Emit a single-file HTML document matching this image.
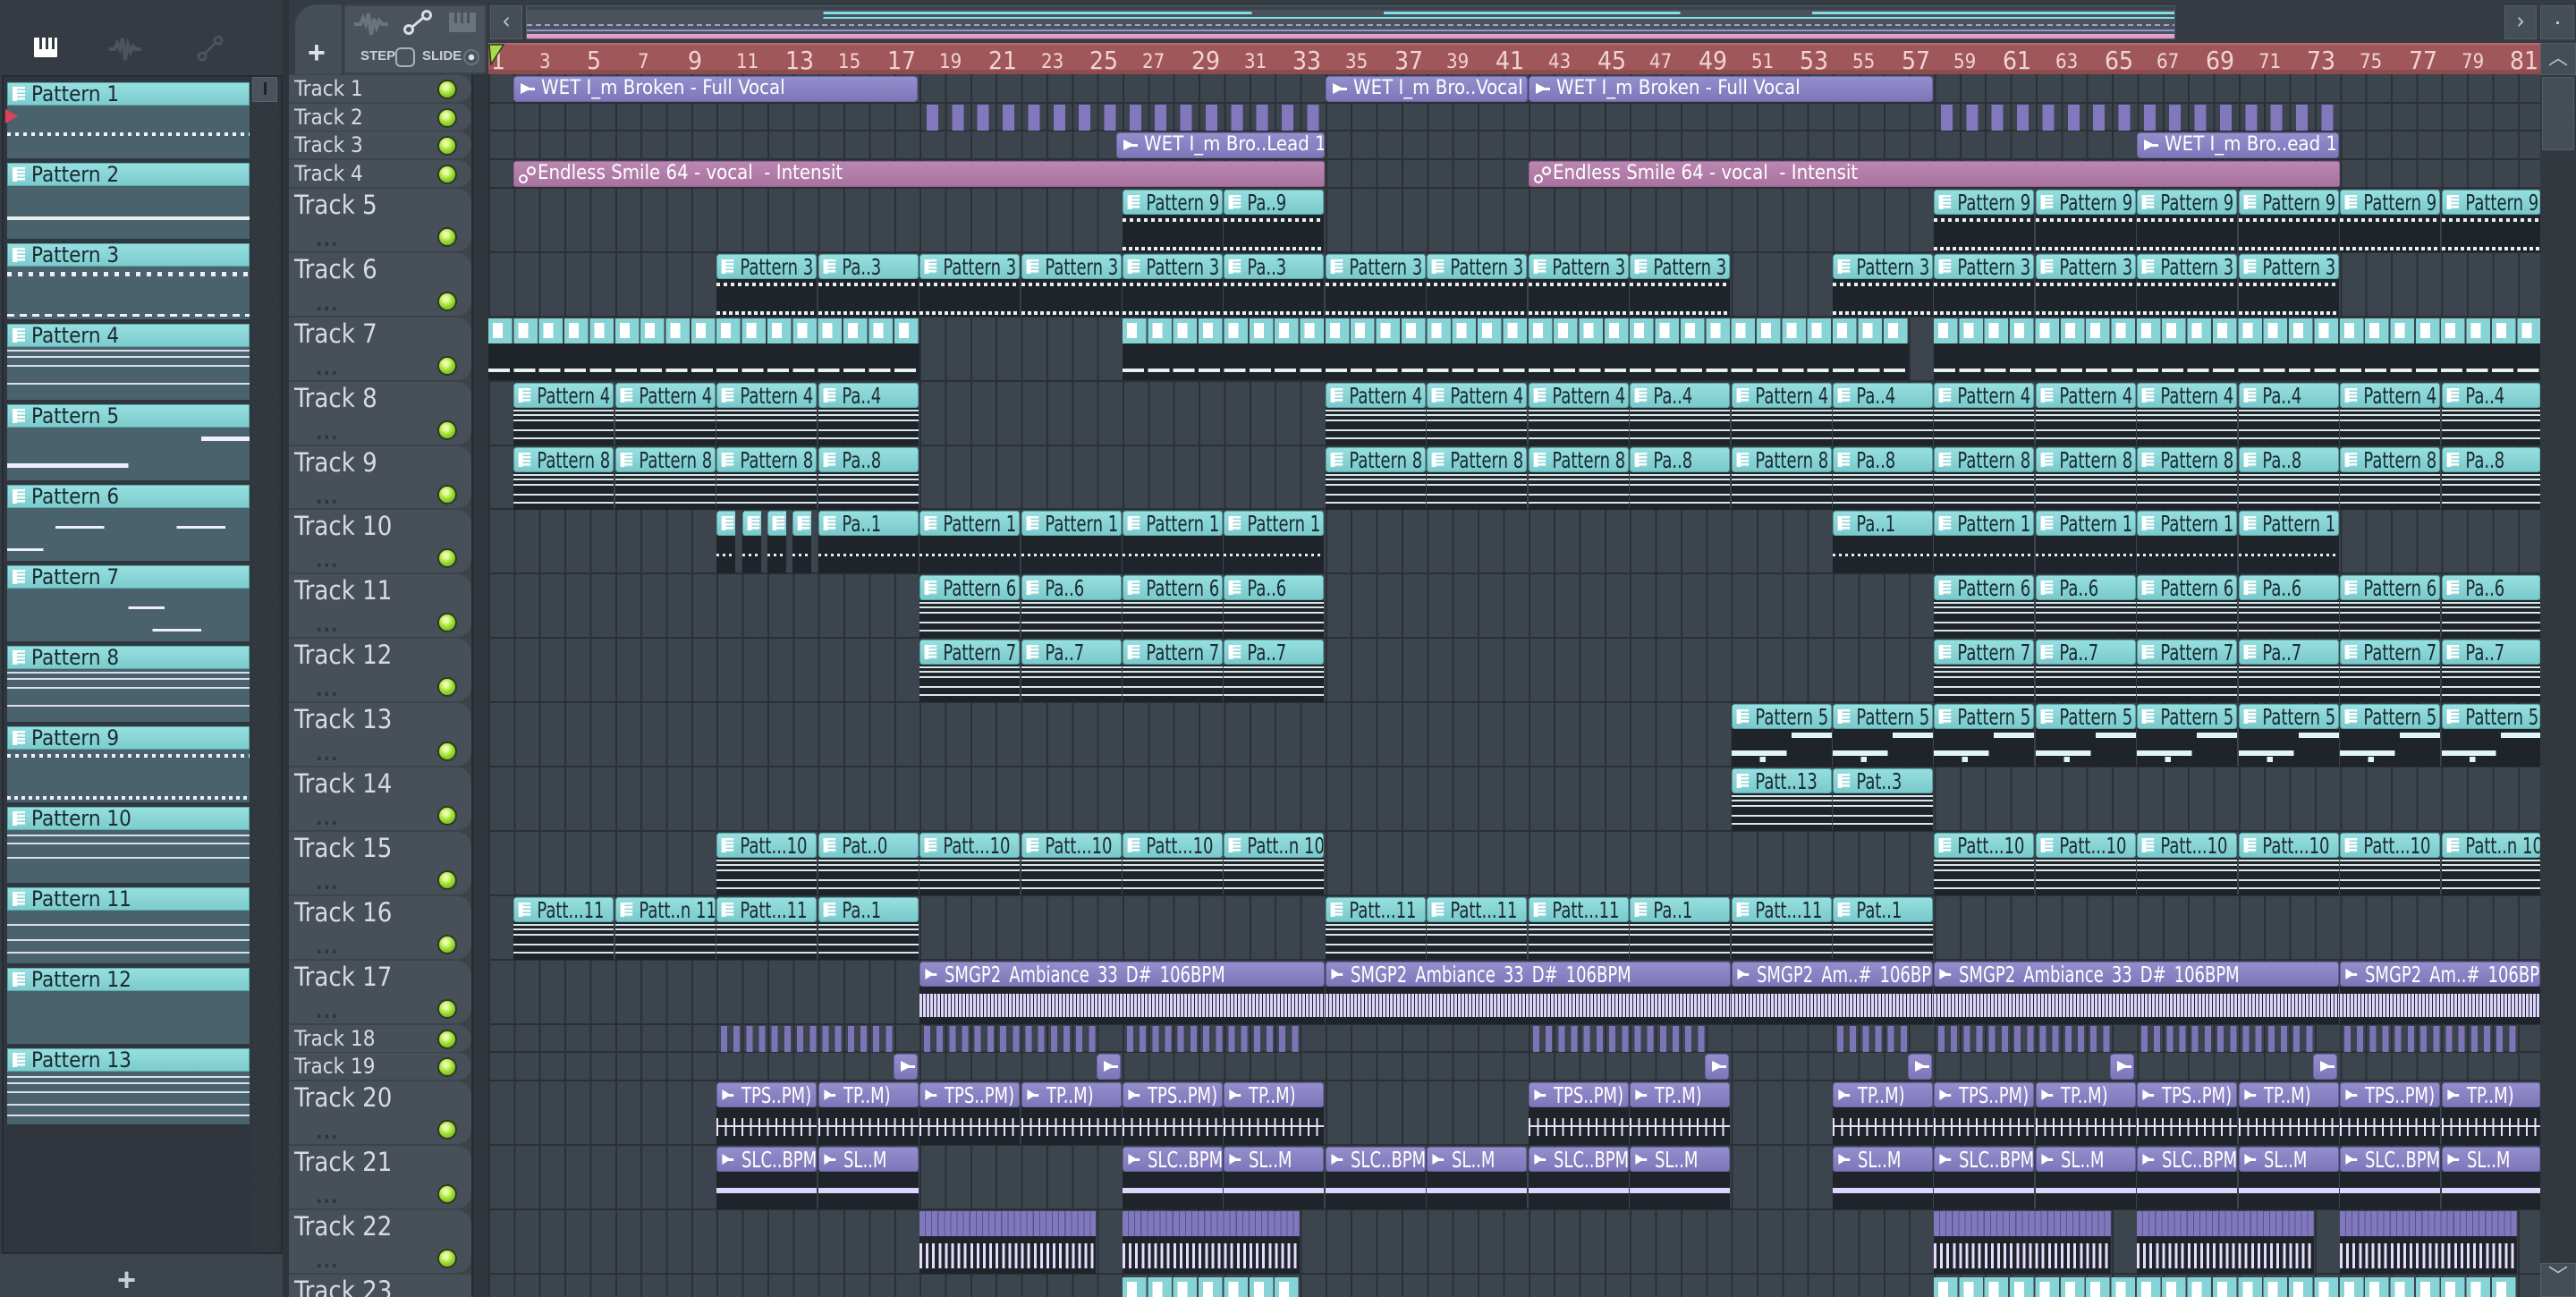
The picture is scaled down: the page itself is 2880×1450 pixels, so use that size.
<!DOCTYPE html>
<html><head><meta charset="utf-8"><style>
*{margin:0;padding:0}
html{width:2880px;height:1450px;overflow:hidden}
body{width:2880px;height:1450px;overflow:hidden;background:#343b42;position:relative;font-family:"Liberation Sans Narrow","DejaVu Sans Condensed","Liberation Sans",sans-serif;font-stretch:condensed}
.abs{position:absolute}
.c{position:absolute;box-sizing:border-box;overflow:hidden}
#grid{position:absolute;left:546px;top:83px;width:2294px;height:1367px;background:
repeating-linear-gradient(90deg,#2a3036 0 2px,transparent 2px 28.36px),#3c444d}
.row{position:absolute;left:546px;width:2294px;border-bottom:2px solid #2a3036;box-sizing:border-box}
.p{height:70px}
.p .h{position:relative;height:28px;width:125%;transform:scaleX(0.8);transform-origin:0 0;box-sizing:border-box;background:linear-gradient(#97dfe0,#79c9cb);border:1px solid #5aa9ad;border-radius:4px;color:#1a2a31;font-size:25px;line-height:27px;padding-left:32px;white-space:nowrap;overflow:hidden}
.p .h::before{content:"";position:absolute;left:6px;top:5px;width:17px;height:16px;background:repeating-linear-gradient(#fff 0 2.5px,#8fd5d6 2.5px 4px);border-left:6px solid #fff;box-sizing:border-box}
.p .b{position:absolute;top:28px;left:0;right:0;bottom:0;background:#1f242b}
.d .b{background:repeating-linear-gradient(90deg,#e6f2f2 0 4px,transparent 4px 8px) 0 4px/100% 4px no-repeat,repeating-linear-gradient(90deg,#e6f2f2 0 4px,transparent 4px 7px) 0 36px/100% 4px no-repeat,#1f242b}
.l .b{background:linear-gradient(transparent 2px,#d8e8e8 2px 4px,transparent 4px 7px,#d8e8e8 7px 9px,transparent 9px 13px,#d8e8e8 13px 15px,transparent 15px 24px,#d8e8e8 24px 26px,transparent 26px 33px,#d8e8e8 33px 35px,transparent 35px),#1f242b}
.s .b{background:linear-gradient(90deg,transparent 0 60%,#e0f6f6 60% 100%) 0 4px/100% 6px no-repeat,linear-gradient(90deg,#e0f6f6 0 55%,transparent 55%) 0 24px/100% 6px no-repeat,linear-gradient(90deg,transparent 28%,#e0f6f6 28% 34%,transparent 34%) 0 31px/100% 6px no-repeat,#1f242b}
.d2 .b{background:repeating-linear-gradient(90deg,#e6f2f2 0 3px,transparent 3px 7px) 0 20px/100% 3px no-repeat,#1f242b}
.a{height:70px}
.a .h{position:relative;height:28px;width:125%;transform:scaleX(0.8);transform-origin:0 0;box-sizing:border-box;background:linear-gradient(#958ecc,#7e76b9);border:1px solid #6a63a6;border-radius:4px;color:#fff;font-size:25px;line-height:27px;padding-left:34px;white-space:nowrap;overflow:hidden}
.a .h::before,.sa::before{content:"";position:absolute;left:7px;top:7px;border-left:12px solid #fff;border-top:6px solid transparent;border-bottom:6px solid transparent}
.a .h::after,.sa::after{content:"";position:absolute;left:7px;top:12px;width:16px;height:3px;background:#fff}
.a .b{position:absolute;top:28px;left:0;right:0;bottom:0;background:#1f242b}
.wf .b{background:linear-gradient(transparent 8px,#ddd5fb 8px 34px,transparent 34px) 0 0/100% 100% no-repeat,#1f242b}
.wf .b::after{content:"";position:absolute;left:0;right:0;top:6px;height:30px;background:repeating-linear-gradient(90deg,transparent 0 3px,#1f242b 3px 4px)}
.tk .b{background:linear-gradient(transparent 20px,#e8e2fb 20px 22px,transparent 22px) ,repeating-linear-gradient(90deg,#e8e2fb 0 2px,transparent 2px 9.4px) 0 12px/100% 20px no-repeat,#1f242b}
.th .b{background:linear-gradient(transparent 18px,#ddd5fb 18px 24px,transparent 24px),#1f242b}
.sa{position:absolute;height:29px;box-sizing:border-box;background:linear-gradient(#958ecc,#7e76b9);border:1px solid #6a63a6;border-radius:4px;color:#fff;font-size:22px;line-height:26px;padding-left:30px;white-space:nowrap;overflow:hidden}
.pk{position:absolute;height:29px;box-sizing:border-box;background:linear-gradient(#bb87b2,#a8739f);border:1px solid #97628f;border-radius:3px;color:#fff;font-size:22px;line-height:26px;padding-left:26px;white-space:nowrap;overflow:hidden}
.pk::before{content:"";position:absolute;left:5px;top:14px;width:6px;height:6px;border:2px solid #fff;border-radius:50%}
.pk::after{content:"";position:absolute;left:14px;top:5px;width:6px;height:6px;border:2px solid #fff;border-radius:50%}
.st2{position:absolute;height:29px;background:repeating-linear-gradient(90deg,#8178bd 0 13px,transparent 13px 28.36px)}
.st18{position:absolute;height:29px;background:repeating-linear-gradient(90deg,#7c74b7 0 7px,transparent 7px 14.18px)}
.tealrep{position:absolute;height:28px;background:repeating-linear-gradient(90deg,transparent 0 5px,#fff 5px 16px,transparent 16px 28.36px) 0 5px/100% 17px no-repeat,repeating-linear-gradient(90deg,#86d4d6 0 26.5px,transparent 26.5px 28.36px)}
.th0{position:absolute;left:323px;width:204px;background:#474f58;border-radius:0 16px 16px 0;box-sizing:border-box;color:#d8dbde;white-space:nowrap}
.th0.sm{font-size:24px;line-height:30px;padding-left:6px}
.th0.bg{font-size:29px;line-height:36px;padding-left:6px}
.th0.bg::after{content:"...";position:absolute;left:30px;top:40px;color:#30363c;font-size:22px;font-weight:bold;letter-spacing:1px}
.led{position:absolute;width:18px;height:18px;border-radius:50%;border:2px solid #2b3a21;background:radial-gradient(circle at 42% 35%,#eaffa8 0 15%,#a6e23a 45%,#5d9a16 100%);left:489px}
.pat{position:absolute;left:8px;width:271px}
.pat .h{height:26px;background:linear-gradient(#97dfe0,#7ccbcd);border:1px solid #5aa9ad;box-sizing:border-box;color:#1a2a31;font-size:24px;line-height:25px;padding-left:26px;position:relative}
.pat .h::before{content:"";position:absolute;left:5px;top:4px;width:14px;height:16px;background:repeating-linear-gradient(#fff 0 2.5px,#8fd5d6 2.5px 4px);border-left:5px solid #fff;box-sizing:border-box}
.pat .b{height:59px;background:#4a626b}
.rl{position:absolute;top:57px;color:#f1d3d3;font-size:22px}
.rl.M{font-size:28px;top:51px}
</style></head><body>

<div class="abs" style="left:0;top:0;width:318px;height:83px;background:#343b42"></div>
<div class="abs" style="left:38px;top:42px;width:26px;height:22px;background:#fff;border-radius:1px"></div>
<div class="abs" style="left:44px;top:42px;width:3px;height:13px;background:#343b42"></div>
<div class="abs" style="left:51px;top:42px;width:3px;height:13px;background:#343b42"></div>
<div class="abs" style="left:58px;top:42px;width:3px;height:13px;background:#343b42"></div>
<svg class="abs" style="left:120px;top:40px" width="40" height="30"><path d="M2 15 L8 15 L11 8 L14 15 L17 3 L20 27 L23 10 L26 18 L29 12 L32 15 L38 15" stroke="#4b545d" stroke-width="4" fill="none"/></svg>
<svg class="abs" style="left:220px;top:38px" width="30" height="32"><circle cx="6" cy="25" r="4" stroke="#4b545d" stroke-width="3" fill="none"/><circle cx="24" cy="7" r="4" stroke="#4b545d" stroke-width="3" fill="none"/><line x1="9" y1="22" x2="21" y2="10" stroke="#4b545d" stroke-width="3"/></svg>
<div class="abs" style="left:2px;top:84px;width:314px;height:1318px;background:#2f363d;border:2px solid #262c32;box-sizing:border-box"></div>
<div class="abs" style="left:282px;top:86px;width:28px;height:1314px;background:repeating-linear-gradient(45deg,#343b42 0 2px,#2e353b 2px 4px)"></div>
<div class="abs" style="left:282px;top:86px;width:28px;height:28px;background:#4a525b;border:1px solid #5b636b;box-sizing:border-box"></div>
<div class="abs" style="left:295px;top:92px;width:3px;height:14px;background:#1d2227"></div>
<div class="abs" style="left:0;top:1402px;width:318px;height:48px;background:#3b434b"></div>
<div class="abs" style="left:131px;top:1410px;color:#c9ced2;font-size:36px;font-weight:bold;font-family:'Liberation Sans',sans-serif">+</div>

<div class="pat" style="top:92px"><div class="h">Pattern 1</div><div class="b" style="background:repeating-linear-gradient(90deg,#eef 0 4px,transparent 4px 9px) 0 30px/100% 4px no-repeat,#4a626b"></div></div>
<div class="abs" style="left:6px;top:122px;border-left:14px solid #e0405a;border-top:8px solid transparent;border-bottom:8px solid transparent"></div>
<div class="pat" style="top:182px"><div class="h">Pattern 2</div><div class="b" style="background:linear-gradient(transparent 34px,#e6eeee 34px 38px,transparent 38px),#4a626b"></div></div>
<div class="pat" style="top:272px"><div class="h">Pattern 3</div><div class="b" style="background:repeating-linear-gradient(90deg,#eef 0 5px,transparent 5px 12px) 0 6px/100% 5px no-repeat,repeating-linear-gradient(90deg,#eef 0 8px,transparent 8px 14px) 0 53px/100% 3px no-repeat,#4a626b"></div></div>
<div class="pat" style="top:362px"><div class="h">Pattern 4</div><div class="b" style="background:linear-gradient(transparent 3px,#dde 3px 5px,transparent 5px 10px,#dde 10px 12px,transparent 12px 20px,#dde 20px 22px,transparent 22px 40px,#dde 40px 42px,transparent 42px),#4a626b"></div></div>
<div class="pat" style="top:452px"><div class="h">Pattern 5</div><div class="b" style="background:linear-gradient(90deg,transparent 80%,#eef 80%) 0 10px/100% 5px no-repeat,linear-gradient(90deg,#eef 0 50%,transparent 50%) 0 40px/100% 5px no-repeat,#4a626b"></div></div>
<div class="pat" style="top:542px"><div class="h">Pattern 6</div><div class="b" style="background:linear-gradient(90deg,transparent 20%,#eef 20% 40%,transparent 40% 70%,#eef 70% 90%,transparent 90%) 0 20px/100% 3px no-repeat,linear-gradient(90deg,#eef 0 15%,transparent 15%) 0 45px/100% 3px no-repeat,#4a626b"></div></div>
<div class="pat" style="top:632px"><div class="h">Pattern 7</div><div class="b" style="background:linear-gradient(90deg,transparent 50%,#eef 50% 65%,transparent 65%) 0 20px/100% 3px no-repeat,linear-gradient(90deg,transparent 60%,#eef 60% 80%,transparent 80%) 0 45px/100% 3px no-repeat,#4a626b"></div></div>
<div class="pat" style="top:722px"><div class="h">Pattern 8</div><div class="b" style="background:linear-gradient(transparent 3px,#dde 3px 5px,transparent 5px 10px,#dde 10px 12px,transparent 12px 20px,#dde 20px 22px,transparent 22px 40px,#dde 40px 42px,transparent 42px),#4a626b"></div></div>
<div class="pat" style="top:812px"><div class="h">Pattern 9</div><div class="b" style="background:repeating-linear-gradient(90deg,#eef 0 4px,transparent 4px 9px) 0 5px/100% 4px no-repeat,repeating-linear-gradient(90deg,#eef 0 4px,transparent 4px 8px) 0 52px/100% 4px no-repeat,#4a626b"></div></div>
<div class="pat" style="top:902px"><div class="h">Pattern 10</div><div class="b" style="background:linear-gradient(transparent 5px,#dde 5px 7px,transparent 7px 14px,#dde 14px 16px,transparent 16px 30px,#dde 30px 32px,transparent 32px),#4a626b"></div></div>
<div class="pat" style="top:992px"><div class="h">Pattern 11</div><div class="b" style="background:linear-gradient(transparent 15px,#dde 15px 17px,transparent 17px 32px,#dde 32px 34px,transparent 34px 46px,#dde 46px 48px,transparent 48px),#4a626b"></div></div>
<div class="pat" style="top:1082px"><div class="h">Pattern 12</div><div class="b"></div></div>
<div class="pat" style="top:1172px"><div class="h">Pattern 13</div><div class="b" style="background:linear-gradient(transparent 5px,#dde 5px 7px,transparent 7px 12px,#dde 12px 14px,transparent 14px 22px,#dde 22px 24px,transparent 24px 36px,#dde 36px 38px,transparent 38px 48px,#dde 48px 50px,transparent 50px),#4a626b"></div></div>

<div class="abs" style="left:316px;top:0;width:7px;height:1450px;background:#2d343a"></div>

<div class="abs" style="left:323px;top:0;width:2557px;height:48px;background:#343b42"></div>
<div class="abs" style="left:330px;top:5px;width:52px;height:78px;background:#454d56;border-radius:24px 0 0 0"></div>
<div class="abs" style="left:344px;top:40px;color:#dfe3e6;font-size:34px;font-weight:bold;font-family:'Liberation Sans',sans-serif">+</div>
<div class="abs" style="left:384px;top:5px;width:160px;height:78px;background:#4a525b;border:2px solid #3c434a;box-sizing:border-box"></div>
<svg class="abs" style="left:394px;top:12px" width="42" height="30"><path d="M2 15 L9 15 L12 8 L15 15 L18 3 L21 27 L24 9 L27 19 L30 11 L33 15 L40 15" stroke="#6b747d" stroke-width="4" fill="none"/></svg>
<svg class="abs" style="left:450px;top:10px" width="34" height="30"><circle cx="7" cy="23" r="4.5" stroke="#d7dde2" stroke-width="3" fill="none"/><circle cx="27" cy="7" r="4.5" stroke="#d7dde2" stroke-width="3" fill="none"/><line x1="11" y1="20" x2="23" y2="10" stroke="#d7dde2" stroke-width="3"/></svg>
<div class="abs" style="left:502px;top:14px;width:30px;height:22px;background:#6b747d"></div>
<div class="abs" style="left:508px;top:14px;width:3px;height:12px;background:#4a525b"></div>
<div class="abs" style="left:515px;top:14px;width:3px;height:12px;background:#4a525b"></div>
<div class="abs" style="left:522px;top:14px;width:3px;height:12px;background:#4a525b"></div>
<div class="abs" style="left:403px;top:54px;color:#c9d0d6;font-size:15px;font-weight:bold;font-family:'Liberation Sans',sans-serif">STEP</div>
<div class="abs" style="left:442px;top:53px;width:18px;height:18px;border:2px solid #aab2b9;border-radius:6px"></div>
<div class="abs" style="left:472px;top:54px;color:#c9d0d6;font-size:15px;font-weight:bold;font-family:'Liberation Sans',sans-serif">SLIDE</div>
<div class="abs" style="left:518px;top:55px;width:14px;height:14px;border:2px solid #6b747d;border-radius:50%;background:radial-gradient(#dfe3e6 0 3px,transparent 3.5px)"></div>

<div class="abs" style="left:548px;top:6px;width:36px;height:38px;background:#454d56;border:1px solid #555d66;box-sizing:border-box;color:#c0c6cc;font-size:26px;line-height:34px;text-align:center">‹</div>
<div class="abs" style="left:588px;top:6px;width:1844px;height:38px;background:
linear-gradient(#3c444c 0 4px,transparent 4px),
linear-gradient(90deg,transparent 0 18%,#7ee0e6 18% 44%,transparent 44% 52%,#7ee0e6 52% 70%,transparent 70% 78%,#7ee0e6 78% 100%) 0 6px/100% 3px no-repeat,
linear-gradient(90deg,transparent 0 18%,#7ee0e6 18% 100%) 0 12px/100% 2px no-repeat,
repeating-linear-gradient(90deg,#a59fd8 0 6px,transparent 6px 10px) 0 20px/100% 2px no-repeat,
linear-gradient(90deg,#9c96cf 0 100%) 0 26px/100% 2px no-repeat,
linear-gradient(#e7a3d6,#d889c4) 0 31px/100% 7px no-repeat,#4a525b;border:1px solid #555d66;box-sizing:border-box"></div>
<div class="abs" style="left:2800px;top:6px;width:36px;height:38px;background:#454d56;border:1px solid #555d66;box-sizing:border-box;color:#c0c6cc;font-size:26px;line-height:34px;text-align:center">›</div>
<div class="abs" style="left:2840px;top:6px;width:38px;height:38px;background:#454d56;border:1px solid #555d66;box-sizing:border-box"></div>
<div class="abs" style="left:2858px;top:24px;width:3px;height:3px;background:#c0c6cc"></div>

<div class="abs" style="left:546px;top:48px;width:2294px;height:35px;background:linear-gradient(#b56a6c 0 2px,#a05759 2px 30px,#8f4b4e 30px)"></div>
<div class="abs" style="left:2840px;top:48px;width:40px;height:36px;background:#454d56;border:1px solid #555d66;box-sizing:border-box;color:#c0c6cc;font-size:22px;line-height:34px;text-align:center">︿</div>
<div class="rl M" style="left:549px">1</div><div class="rl" style="left:603px">3</div><div class="rl M" style="left:656px">5</div><div class="rl" style="left:713px">7</div><div class="rl M" style="left:769px">9</div><div class="rl" style="left:823px">11</div><div class="rl M" style="left:878px">13</div><div class="rl" style="left:937px">15</div><div class="rl M" style="left:992px">17</div><div class="rl" style="left:1050px">19</div><div class="rl M" style="left:1105px">21</div><div class="rl" style="left:1164px">23</div><div class="rl M" style="left:1218px">25</div><div class="rl" style="left:1277px">27</div><div class="rl M" style="left:1332px">29</div><div class="rl" style="left:1391px">31</div><div class="rl M" style="left:1445px">33</div><div class="rl" style="left:1504px">35</div><div class="rl M" style="left:1559px">37</div><div class="rl" style="left:1617px">39</div><div class="rl M" style="left:1672px">41</div><div class="rl" style="left:1731px">43</div><div class="rl M" style="left:1786px">45</div><div class="rl" style="left:1844px">47</div><div class="rl M" style="left:1899px">49</div><div class="rl" style="left:1958px">51</div><div class="rl M" style="left:2012px">53</div><div class="rl" style="left:2071px">55</div><div class="rl M" style="left:2126px">57</div><div class="rl" style="left:2184px">59</div><div class="rl M" style="left:2239px">61</div><div class="rl" style="left:2298px">63</div><div class="rl M" style="left:2353px">65</div><div class="rl" style="left:2411px">67</div><div class="rl M" style="left:2466px">69</div><div class="rl" style="left:2525px">71</div><div class="rl M" style="left:2579px">73</div><div class="rl" style="left:2638px">75</div><div class="rl M" style="left:2693px">77</div><div class="rl" style="left:2752px">79</div><div class="rl M" style="left:2806px">81</div>
<svg class="abs" style="left:546px;top:49px" width="18" height="24"><path d="M1 1 L17 1 L3 23 Z" fill="#a6dc4a" stroke="#2c3a20" stroke-width="1.5"/></svg>

<div class="abs" style="left:2840px;top:84px;width:40px;height:1366px;background:repeating-linear-gradient(45deg,#343b42 0 2px,#2e353b 2px 4px)"></div>
<div class="abs" style="left:2842px;top:86px;width:36px;height:82px;background:#454d56;border:1px solid #555d66;box-sizing:border-box"></div>
<div class="abs" style="left:2840px;top:1412px;width:40px;height:38px;background:#454d56;border:1px solid #555d66;box-sizing:border-box;color:#c0c6cc;font-size:22px;line-height:30px;text-align:center">﹀</div>

<div class="abs" style="left:323px;top:83px;width:223px;height:1367px;background:#3b434b"></div>
<div class="abs" style="left:527px;top:83px;width:19px;height:1367px;background:#2f363c;border-left:2px solid #262b30;box-sizing:border-box"></div>

<div id="grid"></div>
<div class="row" style="top:84px;height:32px"></div>
<div class="row" style="top:116px;height:31px"></div>
<div class="row" style="top:147px;height:32px"></div>
<div class="row" style="top:179px;height:32px"></div>
<div class="row" style="top:211px;height:72px"></div>
<div class="row" style="top:283px;height:72px"></div>
<div class="row" style="top:355px;height:72px"></div>
<div class="row" style="top:427px;height:72px"></div>
<div class="row" style="top:499px;height:71px"></div>
<div class="row" style="top:570px;height:72px"></div>
<div class="row" style="top:642px;height:72px"></div>
<div class="row" style="top:714px;height:72px"></div>
<div class="row" style="top:786px;height:72px"></div>
<div class="row" style="top:858px;height:72px"></div>
<div class="row" style="top:930px;height:72px"></div>
<div class="row" style="top:1002px;height:72px"></div>
<div class="row" style="top:1074px;height:72px"></div>
<div class="row" style="top:1146px;height:31px"></div>
<div class="row" style="top:1177px;height:32px"></div>
<div class="row" style="top:1209px;height:72px"></div>
<div class="row" style="top:1281px;height:72px"></div>
<div class="row" style="top:1353px;height:72px"></div>

<div class="th0 sm" style="top:84px;height:30px">Track 1</div><div class="led" style="top:89px"></div>
<div class="th0 sm" style="top:116px;height:30px">Track 2</div><div class="led" style="top:121px"></div>
<div class="th0 sm" style="top:147px;height:30px">Track 3</div><div class="led" style="top:152px"></div>
<div class="th0 sm" style="top:179px;height:30px">Track 4</div><div class="led" style="top:184px"></div>
<div class="th0 bg" style="top:211px;height:70px">Track 5</div><div class="led" style="top:254px"></div>
<div class="th0 bg" style="top:283px;height:70px">Track 6</div><div class="led" style="top:326px"></div>
<div class="th0 bg" style="top:355px;height:70px">Track 7</div><div class="led" style="top:398px"></div>
<div class="th0 bg" style="top:427px;height:70px">Track 8</div><div class="led" style="top:470px"></div>
<div class="th0 bg" style="top:499px;height:69px">Track 9</div><div class="led" style="top:542px"></div>
<div class="th0 bg" style="top:570px;height:70px">Track 10</div><div class="led" style="top:613px"></div>
<div class="th0 bg" style="top:642px;height:70px">Track 11</div><div class="led" style="top:685px"></div>
<div class="th0 bg" style="top:714px;height:70px">Track 12</div><div class="led" style="top:757px"></div>
<div class="th0 bg" style="top:786px;height:70px">Track 13</div><div class="led" style="top:829px"></div>
<div class="th0 bg" style="top:858px;height:70px">Track 14</div><div class="led" style="top:901px"></div>
<div class="th0 bg" style="top:930px;height:70px">Track 15</div><div class="led" style="top:973px"></div>
<div class="th0 bg" style="top:1002px;height:70px">Track 16</div><div class="led" style="top:1045px"></div>
<div class="th0 bg" style="top:1074px;height:70px">Track 17</div><div class="led" style="top:1117px"></div>
<div class="th0 sm" style="top:1146px;height:30px">Track 18</div><div class="led" style="top:1151px"></div>
<div class="th0 sm" style="top:1177px;height:30px">Track 19</div><div class="led" style="top:1182px"></div>
<div class="th0 bg" style="top:1209px;height:70px">Track 20</div><div class="led" style="top:1252px"></div>
<div class="th0 bg" style="top:1281px;height:70px">Track 21</div><div class="led" style="top:1324px"></div>
<div class="th0 bg" style="top:1353px;height:70px">Track 22</div><div class="led" style="top:1396px"></div>
<div class="th0 bg" style="top:1425px;height:25px;border-radius:0">Track 23</div>

<div class="sa" style="left:574px;top:85px;width:452px">WET I_m Broken - Full Vocal</div>
<div class="sa" style="left:1482px;top:85px;width:226px">WET I_m Bro..Vocal #2</div>
<div class="sa" style="left:1709px;top:85px;width:452px">WET I_m Broken - Full Vocal</div>
<div class="st2" style="left:1036px;top:117px;width:454px"></div>
<div class="st2" style="left:2170px;top:117px;width:454px"></div>
<div class="sa" style="left:1248px;top:148px;width:233px">WET I_m Bro..Lead 1 #2</div>
<div class="sa" style="left:2389px;top:148px;width:226px">WET I_m Bro..ead 1 #2</div>
<div class="pk" style="left:574px;top:180px;width:907px">Endless Smile 64 - vocal&nbsp; - Intensit</div>
<div class="pk" style="left:1709px;top:180px;width:907px">Endless Smile 64 - vocal&nbsp; - Intensit</div>

<div class="c p d" style="left:1255px;top:212px;width:112px"><div class="h">Pattern 9</div><div class="b"></div></div>
<div class="c p d" style="left:1368px;top:212px;width:112px"><div class="h">Pa..9</div><div class="b"></div></div>
<div class="c p d" style="left:2162px;top:212px;width:112px"><div class="h">Pattern 9</div><div class="b"></div></div>
<div class="c p d" style="left:2276px;top:212px;width:112px"><div class="h">Pattern 9</div><div class="b"></div></div>
<div class="c p d" style="left:2389px;top:212px;width:112px"><div class="h">Pattern 9</div><div class="b"></div></div>
<div class="c p d" style="left:2503px;top:212px;width:112px"><div class="h">Pattern 9</div><div class="b"></div></div>
<div class="c p d" style="left:2616px;top:212px;width:112px"><div class="h">Pattern 9</div><div class="b"></div></div>
<div class="c p d" style="left:2730px;top:212px;width:110px"><div class="h">Pattern 9</div><div class="b"></div></div>

<div class="c p d" style="left:801px;top:284px;width:112px"><div class="h">Pattern 3</div><div class="b"></div></div>
<div class="c p d" style="left:915px;top:284px;width:112px"><div class="h">Pa..3</div><div class="b"></div></div>
<div class="c p d" style="left:1028px;top:284px;width:112px"><div class="h">Pattern 3</div><div class="b"></div></div>
<div class="c p d" style="left:1142px;top:284px;width:112px"><div class="h">Pattern 3</div><div class="b"></div></div>
<div class="c p d" style="left:1255px;top:284px;width:112px"><div class="h">Pattern 3</div><div class="b"></div></div>
<div class="c p d" style="left:1368px;top:284px;width:112px"><div class="h">Pa..3</div><div class="b"></div></div>
<div class="c p d" style="left:1482px;top:284px;width:112px"><div class="h">Pattern 3</div><div class="b"></div></div>
<div class="c p d" style="left:1595px;top:284px;width:112px"><div class="h">Pattern 3</div><div class="b"></div></div>
<div class="c p d" style="left:1709px;top:284px;width:112px"><div class="h">Pattern 3</div><div class="b"></div></div>
<div class="c p d" style="left:1822px;top:284px;width:112px"><div class="h">Pattern 3</div><div class="b"></div></div>
<div class="c p d" style="left:2049px;top:284px;width:112px"><div class="h">Pattern 3</div><div class="b"></div></div>
<div class="c p d" style="left:2162px;top:284px;width:112px"><div class="h">Pattern 3</div><div class="b"></div></div>
<div class="c p d" style="left:2276px;top:284px;width:112px"><div class="h">Pattern 3</div><div class="b"></div></div>
<div class="c p d" style="left:2389px;top:284px;width:112px"><div class="h">Pattern 3</div><div class="b"></div></div>
<div class="c p d" style="left:2503px;top:284px;width:112px"><div class="h">Pattern 3</div><div class="b"></div></div>

<div class="abs" style="left:546px;top:384px;width:482px;height:41px;background:repeating-linear-gradient(90deg,#e6f2f2 0 24px,transparent 24px 28.36px) 0 28px/100% 4px no-repeat,#1f242b"></div>
<div class="tealrep" style="left:546px;top:356px;width:482px"></div>
<div class="abs" style="left:1255px;top:384px;width:879px;height:41px;background:repeating-linear-gradient(90deg,#e6f2f2 0 24px,transparent 24px 28.36px) 0 28px/100% 4px no-repeat,#1f242b"></div>
<div class="tealrep" style="left:1255px;top:356px;width:879px"></div>
<div class="abs" style="left:2162px;top:384px;width:678px;height:41px;background:repeating-linear-gradient(90deg,#e6f2f2 0 24px,transparent 24px 28.36px) 0 28px/100% 4px no-repeat,#1f242b"></div>
<div class="tealrep" style="left:2162px;top:356px;width:678px"></div>

<div class="c p l" style="left:574px;top:428px;width:112px"><div class="h">Pattern 4</div><div class="b"></div></div>
<div class="c p l" style="left:688px;top:428px;width:112px"><div class="h">Pattern 4</div><div class="b"></div></div>
<div class="c p l" style="left:801px;top:428px;width:112px"><div class="h">Pattern 4</div><div class="b"></div></div>
<div class="c p l" style="left:915px;top:428px;width:112px"><div class="h">Pa..4</div><div class="b"></div></div>
<div class="c p l" style="left:1482px;top:428px;width:112px"><div class="h">Pattern 4</div><div class="b"></div></div>
<div class="c p l" style="left:1595px;top:428px;width:112px"><div class="h">Pattern 4</div><div class="b"></div></div>
<div class="c p l" style="left:1709px;top:428px;width:112px"><div class="h">Pattern 4</div><div class="b"></div></div>
<div class="c p l" style="left:1822px;top:428px;width:112px"><div class="h">Pa..4</div><div class="b"></div></div>
<div class="c p l" style="left:1936px;top:428px;width:112px"><div class="h">Pattern 4</div><div class="b"></div></div>
<div class="c p l" style="left:2049px;top:428px;width:112px"><div class="h">Pa..4</div><div class="b"></div></div>
<div class="c p l" style="left:2162px;top:428px;width:112px"><div class="h">Pattern 4</div><div class="b"></div></div>
<div class="c p l" style="left:2276px;top:428px;width:112px"><div class="h">Pattern 4</div><div class="b"></div></div>
<div class="c p l" style="left:2389px;top:428px;width:112px"><div class="h">Pattern 4</div><div class="b"></div></div>
<div class="c p l" style="left:2503px;top:428px;width:112px"><div class="h">Pa..4</div><div class="b"></div></div>
<div class="c p l" style="left:2616px;top:428px;width:112px"><div class="h">Pattern 4</div><div class="b"></div></div>
<div class="c p l" style="left:2730px;top:428px;width:110px"><div class="h">Pa..4</div><div class="b"></div></div>

<div class="c p l" style="left:574px;top:500px;width:112px"><div class="h">Pattern 8</div><div class="b"></div></div>
<div class="c p l" style="left:688px;top:500px;width:112px"><div class="h">Pattern 8</div><div class="b"></div></div>
<div class="c p l" style="left:801px;top:500px;width:112px"><div class="h">Pattern 8</div><div class="b"></div></div>
<div class="c p l" style="left:915px;top:500px;width:112px"><div class="h">Pa..8</div><div class="b"></div></div>
<div class="c p l" style="left:1482px;top:500px;width:112px"><div class="h">Pattern 8</div><div class="b"></div></div>
<div class="c p l" style="left:1595px;top:500px;width:112px"><div class="h">Pattern 8</div><div class="b"></div></div>
<div class="c p l" style="left:1709px;top:500px;width:112px"><div class="h">Pattern 8</div><div class="b"></div></div>
<div class="c p l" style="left:1822px;top:500px;width:112px"><div class="h">Pa..8</div><div class="b"></div></div>
<div class="c p l" style="left:1936px;top:500px;width:112px"><div class="h">Pattern 8</div><div class="b"></div></div>
<div class="c p l" style="left:2049px;top:500px;width:112px"><div class="h">Pa..8</div><div class="b"></div></div>
<div class="c p l" style="left:2162px;top:500px;width:112px"><div class="h">Pattern 8</div><div class="b"></div></div>
<div class="c p l" style="left:2276px;top:500px;width:112px"><div class="h">Pattern 8</div><div class="b"></div></div>
<div class="c p l" style="left:2389px;top:500px;width:112px"><div class="h">Pattern 8</div><div class="b"></div></div>
<div class="c p l" style="left:2503px;top:500px;width:112px"><div class="h">Pa..8</div><div class="b"></div></div>
<div class="c p l" style="left:2616px;top:500px;width:112px"><div class="h">Pattern 8</div><div class="b"></div></div>
<div class="c p l" style="left:2730px;top:500px;width:110px"><div class="h">Pa..8</div><div class="b"></div></div>

<div class="c p d2" style="left:801px;top:571px;width:21px"><div class="h"></div><div class="b"></div></div>
<div class="c p d2" style="left:830px;top:571px;width:21px"><div class="h"></div><div class="b"></div></div>
<div class="c p d2" style="left:858px;top:571px;width:21px"><div class="h"></div><div class="b"></div></div>
<div class="c p d2" style="left:886px;top:571px;width:21px"><div class="h"></div><div class="b"></div></div>
<div class="c p d2" style="left:915px;top:571px;width:112px"><div class="h">Pa..1</div><div class="b"></div></div>
<div class="c p d2" style="left:1028px;top:571px;width:112px"><div class="h">Pattern 1</div><div class="b"></div></div>
<div class="c p d2" style="left:1142px;top:571px;width:112px"><div class="h">Pattern 1</div><div class="b"></div></div>
<div class="c p d2" style="left:1255px;top:571px;width:112px"><div class="h">Pattern 1</div><div class="b"></div></div>
<div class="c p d2" style="left:1368px;top:571px;width:112px"><div class="h">Pattern 1</div><div class="b"></div></div>
<div class="c p d2" style="left:2049px;top:571px;width:112px"><div class="h">Pa..1</div><div class="b"></div></div>
<div class="c p d2" style="left:2162px;top:571px;width:112px"><div class="h">Pattern 1</div><div class="b"></div></div>
<div class="c p d2" style="left:2276px;top:571px;width:112px"><div class="h">Pattern 1</div><div class="b"></div></div>
<div class="c p d2" style="left:2389px;top:571px;width:112px"><div class="h">Pattern 1</div><div class="b"></div></div>
<div class="c p d2" style="left:2503px;top:571px;width:112px"><div class="h">Pattern 1</div><div class="b"></div></div>

<div class="c p l" style="left:1028px;top:643px;width:112px"><div class="h">Pattern 6</div><div class="b"></div></div>
<div class="c p l" style="left:1142px;top:643px;width:112px"><div class="h">Pa..6</div><div class="b"></div></div>
<div class="c p l" style="left:1255px;top:643px;width:112px"><div class="h">Pattern 6</div><div class="b"></div></div>
<div class="c p l" style="left:1368px;top:643px;width:112px"><div class="h">Pa..6</div><div class="b"></div></div>
<div class="c p l" style="left:2162px;top:643px;width:112px"><div class="h">Pattern 6</div><div class="b"></div></div>
<div class="c p l" style="left:2276px;top:643px;width:112px"><div class="h">Pa..6</div><div class="b"></div></div>
<div class="c p l" style="left:2389px;top:643px;width:112px"><div class="h">Pattern 6</div><div class="b"></div></div>
<div class="c p l" style="left:2503px;top:643px;width:112px"><div class="h">Pa..6</div><div class="b"></div></div>
<div class="c p l" style="left:2616px;top:643px;width:112px"><div class="h">Pattern 6</div><div class="b"></div></div>
<div class="c p l" style="left:2730px;top:643px;width:110px"><div class="h">Pa..6</div><div class="b"></div></div>

<div class="c p l" style="left:1028px;top:715px;width:112px"><div class="h">Pattern 7</div><div class="b"></div></div>
<div class="c p l" style="left:1142px;top:715px;width:112px"><div class="h">Pa..7</div><div class="b"></div></div>
<div class="c p l" style="left:1255px;top:715px;width:112px"><div class="h">Pattern 7</div><div class="b"></div></div>
<div class="c p l" style="left:1368px;top:715px;width:112px"><div class="h">Pa..7</div><div class="b"></div></div>
<div class="c p l" style="left:2162px;top:715px;width:112px"><div class="h">Pattern 7</div><div class="b"></div></div>
<div class="c p l" style="left:2276px;top:715px;width:112px"><div class="h">Pa..7</div><div class="b"></div></div>
<div class="c p l" style="left:2389px;top:715px;width:112px"><div class="h">Pattern 7</div><div class="b"></div></div>
<div class="c p l" style="left:2503px;top:715px;width:112px"><div class="h">Pa..7</div><div class="b"></div></div>
<div class="c p l" style="left:2616px;top:715px;width:112px"><div class="h">Pattern 7</div><div class="b"></div></div>
<div class="c p l" style="left:2730px;top:715px;width:110px"><div class="h">Pa..7</div><div class="b"></div></div>

<div class="c p s" style="left:1936px;top:787px;width:112px"><div class="h">Pattern 5</div><div class="b"></div></div>
<div class="c p s" style="left:2049px;top:787px;width:112px"><div class="h">Pattern 5</div><div class="b"></div></div>
<div class="c p s" style="left:2162px;top:787px;width:112px"><div class="h">Pattern 5</div><div class="b"></div></div>
<div class="c p s" style="left:2276px;top:787px;width:112px"><div class="h">Pattern 5</div><div class="b"></div></div>
<div class="c p s" style="left:2389px;top:787px;width:112px"><div class="h">Pattern 5</div><div class="b"></div></div>
<div class="c p s" style="left:2503px;top:787px;width:112px"><div class="h">Pattern 5</div><div class="b"></div></div>
<div class="c p s" style="left:2616px;top:787px;width:112px"><div class="h">Pattern 5</div><div class="b"></div></div>
<div class="c p s" style="left:2730px;top:787px;width:110px"><div class="h">Pattern 5</div><div class="b"></div></div>

<div class="c p l" style="left:1936px;top:859px;width:112px"><div class="h">Patt..13</div><div class="b"></div></div>
<div class="c p l" style="left:2049px;top:859px;width:112px"><div class="h">Pat..3</div><div class="b"></div></div>

<div class="c p l" style="left:801px;top:931px;width:112px"><div class="h">Patt...10</div><div class="b"></div></div>
<div class="c p l" style="left:915px;top:931px;width:112px"><div class="h">Pat..0</div><div class="b"></div></div>
<div class="c p l" style="left:1028px;top:931px;width:112px"><div class="h">Patt...10</div><div class="b"></div></div>
<div class="c p l" style="left:1142px;top:931px;width:112px"><div class="h">Patt...10</div><div class="b"></div></div>
<div class="c p l" style="left:1255px;top:931px;width:112px"><div class="h">Patt...10</div><div class="b"></div></div>
<div class="c p l" style="left:1368px;top:931px;width:112px"><div class="h">Patt..n 10</div><div class="b"></div></div>
<div class="c p l" style="left:2162px;top:931px;width:112px"><div class="h">Patt...10</div><div class="b"></div></div>
<div class="c p l" style="left:2276px;top:931px;width:112px"><div class="h">Patt...10</div><div class="b"></div></div>
<div class="c p l" style="left:2389px;top:931px;width:112px"><div class="h">Patt...10</div><div class="b"></div></div>
<div class="c p l" style="left:2503px;top:931px;width:112px"><div class="h">Patt...10</div><div class="b"></div></div>
<div class="c p l" style="left:2616px;top:931px;width:112px"><div class="h">Patt...10</div><div class="b"></div></div>
<div class="c p l" style="left:2730px;top:931px;width:110px"><div class="h">Patt..n 10</div><div class="b"></div></div>

<div class="c p l" style="left:574px;top:1003px;width:112px"><div class="h">Patt...11</div><div class="b"></div></div>
<div class="c p l" style="left:688px;top:1003px;width:112px"><div class="h">Patt..n 11</div><div class="b"></div></div>
<div class="c p l" style="left:801px;top:1003px;width:112px"><div class="h">Patt...11</div><div class="b"></div></div>
<div class="c p l" style="left:915px;top:1003px;width:112px"><div class="h">Pa..1</div><div class="b"></div></div>
<div class="c p l" style="left:1482px;top:1003px;width:112px"><div class="h">Patt...11</div><div class="b"></div></div>
<div class="c p l" style="left:1595px;top:1003px;width:112px"><div class="h">Patt...11</div><div class="b"></div></div>
<div class="c p l" style="left:1709px;top:1003px;width:112px"><div class="h">Patt...11</div><div class="b"></div></div>
<div class="c p l" style="left:1822px;top:1003px;width:112px"><div class="h">Pa..1</div><div class="b"></div></div>
<div class="c p l" style="left:1936px;top:1003px;width:112px"><div class="h">Patt...11</div><div class="b"></div></div>
<div class="c p l" style="left:2049px;top:1003px;width:112px"><div class="h">Pat..1</div><div class="b"></div></div>

<div class="c a wf" style="left:1028px;top:1075px;width:453px"><div class="h">SMGP2_Ambiance_33_D#_106BPM</div><div class="b"></div></div>
<div class="c a wf" style="left:1482px;top:1075px;width:453px"><div class="h">SMGP2_Ambiance_33_D#_106BPM</div><div class="b"></div></div>
<div class="c a wf" style="left:1936px;top:1075px;width:225px"><div class="h">SMGP2_Am..#_106BPM</div><div class="b"></div></div>
<div class="c a wf" style="left:2162px;top:1075px;width:453px"><div class="h">SMGP2_Ambiance_33_D#_106BPM</div><div class="b"></div></div>
<div class="c a wf" style="left:2616px;top:1075px;width:224px"><div class="h">SMGP2_Am..#_106BPM</div><div class="b"></div></div>

<div class="st18" style="left:806px;top:1147px;width:196px"></div>
<div class="st18" style="left:1033px;top:1147px;width:196px"></div>
<div class="st18" style="left:1260px;top:1147px;width:196px"></div>
<div class="st18" style="left:1714px;top:1147px;width:196px"></div>
<div class="st18" style="left:2054px;top:1147px;width:84px"></div>
<div class="st18" style="left:2167px;top:1147px;width:196px"></div>
<div class="st18" style="left:2394px;top:1147px;width:196px"></div>
<div class="st18" style="left:2621px;top:1147px;width:196px"></div>

<div class="sa" style="left:999px;top:1178px;width:27px;padding:0"></div>
<div class="sa" style="left:1226px;top:1178px;width:27px;padding:0"></div>
<div class="sa" style="left:1906px;top:1178px;width:27px;padding:0"></div>
<div class="sa" style="left:2133px;top:1178px;width:27px;padding:0"></div>
<div class="sa" style="left:2359px;top:1178px;width:27px;padding:0"></div>
<div class="sa" style="left:2586px;top:1178px;width:27px;padding:0"></div>

<div class="c a tk" style="left:801px;top:1210px;width:112px"><div class="h">TPS..PM)</div><div class="b"></div></div>
<div class="c a tk" style="left:915px;top:1210px;width:112px"><div class="h">TP..M)</div><div class="b"></div></div>
<div class="c a tk" style="left:1028px;top:1210px;width:112px"><div class="h">TPS..PM)</div><div class="b"></div></div>
<div class="c a tk" style="left:1142px;top:1210px;width:112px"><div class="h">TP..M)</div><div class="b"></div></div>
<div class="c a tk" style="left:1255px;top:1210px;width:112px"><div class="h">TPS..PM)</div><div class="b"></div></div>
<div class="c a tk" style="left:1368px;top:1210px;width:112px"><div class="h">TP..M)</div><div class="b"></div></div>
<div class="c a tk" style="left:1709px;top:1210px;width:112px"><div class="h">TPS..PM)</div><div class="b"></div></div>
<div class="c a tk" style="left:1822px;top:1210px;width:112px"><div class="h">TP..M)</div><div class="b"></div></div>
<div class="c a tk" style="left:2049px;top:1210px;width:112px"><div class="h">TP..M)</div><div class="b"></div></div>
<div class="c a tk" style="left:2162px;top:1210px;width:112px"><div class="h">TPS..PM)</div><div class="b"></div></div>
<div class="c a tk" style="left:2276px;top:1210px;width:112px"><div class="h">TP..M)</div><div class="b"></div></div>
<div class="c a tk" style="left:2389px;top:1210px;width:112px"><div class="h">TPS..PM)</div><div class="b"></div></div>
<div class="c a tk" style="left:2503px;top:1210px;width:112px"><div class="h">TP..M)</div><div class="b"></div></div>
<div class="c a tk" style="left:2616px;top:1210px;width:112px"><div class="h">TPS..PM)</div><div class="b"></div></div>
<div class="c a tk" style="left:2730px;top:1210px;width:110px"><div class="h">TP..M)</div><div class="b"></div></div>

<div class="c a th" style="left:801px;top:1282px;width:112px"><div class="h">SLC..BPM</div><div class="b"></div></div>
<div class="c a th" style="left:915px;top:1282px;width:112px"><div class="h">SL..M</div><div class="b"></div></div>
<div class="c a th" style="left:1255px;top:1282px;width:112px"><div class="h">SLC..BPM</div><div class="b"></div></div>
<div class="c a th" style="left:1368px;top:1282px;width:112px"><div class="h">SL..M</div><div class="b"></div></div>
<div class="c a th" style="left:1482px;top:1282px;width:112px"><div class="h">SLC..BPM</div><div class="b"></div></div>
<div class="c a th" style="left:1595px;top:1282px;width:112px"><div class="h">SL..M</div><div class="b"></div></div>
<div class="c a th" style="left:1709px;top:1282px;width:112px"><div class="h">SLC..BPM</div><div class="b"></div></div>
<div class="c a th" style="left:1822px;top:1282px;width:112px"><div class="h">SL..M</div><div class="b"></div></div>
<div class="c a th" style="left:2049px;top:1282px;width:112px"><div class="h">SL..M</div><div class="b"></div></div>
<div class="c a th" style="left:2162px;top:1282px;width:112px"><div class="h">SLC..BPM</div><div class="b"></div></div>
<div class="c a th" style="left:2276px;top:1282px;width:112px"><div class="h">SL..M</div><div class="b"></div></div>
<div class="c a th" style="left:2389px;top:1282px;width:112px"><div class="h">SLC..BPM</div><div class="b"></div></div>
<div class="c a th" style="left:2503px;top:1282px;width:112px"><div class="h">SL..M</div><div class="b"></div></div>
<div class="c a th" style="left:2616px;top:1282px;width:112px"><div class="h">SLC..BPM</div><div class="b"></div></div>
<div class="c a th" style="left:2730px;top:1282px;width:110px"><div class="h">SL..M</div><div class="b"></div></div>

<div class="abs" style="left:1028px;top:1354px;width:197px;height:70px;background:repeating-linear-gradient(90deg,#8078bb 0 6px,#5a5390 6px 7.1px) 0 0/100% 28px no-repeat,repeating-linear-gradient(90deg,#e3dcfb 0 3px,transparent 3px 7.1px) 0 36px/100% 28px no-repeat,#1f242b"></div>
<div class="abs" style="left:1255px;top:1354px;width:198px;height:70px;background:repeating-linear-gradient(90deg,#8078bb 0 6px,#5a5390 6px 7.1px) 0 0/100% 28px no-repeat,repeating-linear-gradient(90deg,#e3dcfb 0 3px,transparent 3px 7.1px) 0 36px/100% 28px no-repeat,#1f242b"></div>
<div class="abs" style="left:2162px;top:1354px;width:198px;height:70px;background:repeating-linear-gradient(90deg,#8078bb 0 6px,#5a5390 6px 7.1px) 0 0/100% 28px no-repeat,repeating-linear-gradient(90deg,#e3dcfb 0 3px,transparent 3px 7.1px) 0 36px/100% 28px no-repeat,#1f242b"></div>
<div class="abs" style="left:2389px;top:1354px;width:198px;height:70px;background:repeating-linear-gradient(90deg,#8078bb 0 6px,#5a5390 6px 7.1px) 0 0/100% 28px no-repeat,repeating-linear-gradient(90deg,#e3dcfb 0 3px,transparent 3px 7.1px) 0 36px/100% 28px no-repeat,#1f242b"></div>
<div class="abs" style="left:2616px;top:1354px;width:198px;height:70px;background:repeating-linear-gradient(90deg,#8078bb 0 6px,#5a5390 6px 7.1px) 0 0/100% 28px no-repeat,repeating-linear-gradient(90deg,#e3dcfb 0 3px,transparent 3px 7.1px) 0 36px/100% 28px no-repeat,#1f242b"></div>

<div class="tealrep" style="left:1255px;top:1428px;width:198px;height:22px"></div>
<div class="tealrep" style="left:2162px;top:1428px;width:652px;height:22px"></div>

</body></html>
